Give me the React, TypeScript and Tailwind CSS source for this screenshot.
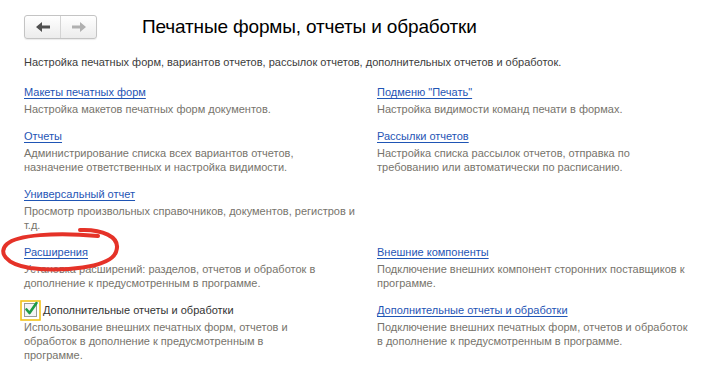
const LINK = "#1f55b5";

type Item = { title: string; text: string } | null;

const ROWS: [Item, Item][] = [
  [
    { title: "Макеты печатных форм", text: "Настройка макетов печатных форм документов." },
    { title: "Подменю \"Печать\"", text: "Настройка видимости команд печати в формах." },
  ],
  [
    { title: "Отчеты", text: "Администрирование списка всех вариантов отчетов,\nназначение ответственных и настройка видимости." },
    { title: "Рассылки отчетов", text: "Настройка списка рассылок отчетов, отправка по требованию или автоматически по расписанию." },
  ],
  [
    { title: "Универсальный отчет", text: "Просмотр произвольных справочников, документов, регистров и т.д." },
    null,
  ],
  [
    { title: "Расширения", text: "Установка расширений: разделов, отчетов и обработок в дополнение к предусмотренным в программе." },
    { title: "Внешние компоненты", text: "Подключение внешних компонент сторонних поставщиков к программе." },
  ],
];

function Arrow({ dir, color }: { dir: "left" | "right"; color: string }) {
  return (
    <svg width="14" height="10" viewBox="0 0 14 10" className={dir === "right" ? "rotate-180" : ""}>
      <path d="M0 5 L6 0 L6 3.5 L14 3.5 L14 6.5 L6 6.5 L6 10 Z" fill={color} />
    </svg>
  );
}

function Section({ item }: { item: Item }) {
  if (!item) return <div />;
  return (
    <div>
      <a href="#" className="block leading-[16px] text-[11px] underline underline-offset-[2px]" style={{ color: LINK }}>
        <span>{item.title}</span>
      </a>
      <p className="mt-[2px] whitespace-pre-line leading-[14px] text-[11px] text-[#77746c]">{item.text}</p>
    </div>
  );
}

function Checkbox() {
  return (
    <svg width="21" height="21" viewBox="0 0 21 21" className="shrink-0">
      <rect x="1" y="1" width="19" height="19" fill="none" stroke="#f2c21a" strokeWidth="1.6" />
      <rect x="4.5" y="3.5" width="12" height="13" fill="#f4f4f4" stroke="#9a9a9a" />
      <path d="M6.5 9.5 L9.5 13 L16.5 3" fill="none" stroke="#1f9a45" strokeWidth="2.6" strokeLinecap="round" strokeLinejoin="round" />
    </svg>
  );
}

export default function App() {
  return (
    <div className="relative w-[710px] h-[387px] overflow-hidden bg-white font-['Liberation_Sans',Arial,sans-serif]">
      {/* Header */}
      <div className="flex items-center pt-[15px] pl-[24px]">
        <div className="flex h-[24px] w-[73px] rounded-[3px] border border-[#c4c4c4] bg-gradient-to-b from-white to-[#ececec] shadow-[0_1px_1px_rgba(0,0,0,0.08)]">
          <button className="flex flex-1 items-center justify-center border-r border-[#d4d4d4]">
            <Arrow dir="left" color="#505050" />
          </button>
          <button className="flex flex-1 items-center justify-center">
            <Arrow dir="right" color="#b0b0b0" />
          </button>
        </div>
        <h1 className="ml-[45px] text-[19px] leading-[24px] tracking-[-0.15px] text-black">Печатные формы, отчеты и обработки</h1>
      </div>

      <p className="mt-[15px] pl-[24px] text-[11px] leading-[16px] text-[#3c3c3c]">
        Настройка печатных форм, вариантов отчетов, рассылок отчетов, дополнительных отчетов и обработок.
      </p>

      <div className="mt-[14px] grid grid-cols-[335px_315px] gap-x-[18px] gap-y-[12px] pl-[24px]">
        {ROWS.map(([l, r], i) => (
          <div key={i} className="contents">
            <Section item={l} />
            <Section item={r} />
          </div>
        ))}

        <div>
          <div className="flex h-[16px] items-center">
            <div className="-ml-[4px]">
              <Checkbox />
            </div>
            <span className="ml-[2px] text-[11px] leading-[16px] text-[#333]">Дополнительные отчеты и обработки</span>
          </div>
          <p className="mt-[2px] w-[270px] leading-[14px] text-[11px] text-[#77746c]">
            Использование внешних печатных форм, отчетов и обработок в дополнение к предусмотренным в программе.
          </p>
        </div>
        <Section
          item={{
            title: "Дополнительные отчеты и обработки",
            text: "Подключение внешних печатных форм, отчетов и обработок в дополнение к предусмотренным в программе.",
          }}
        />
      </div>

      {/* hand-drawn annotation */}
      <svg className="pointer-events-none absolute left-0 top-0" width="710" height="387">
        <path
          d="M80 230 C100 229 122 236 116 252 C110 268 62 272 30 268 C5 264 -2 252 7 244 C17 235 55 232 98 236"
          fill="none"
          stroke="#e53228"
          strokeWidth="4"
          strokeLinecap="round"
        />
      </svg>
    </div>
  );
}
